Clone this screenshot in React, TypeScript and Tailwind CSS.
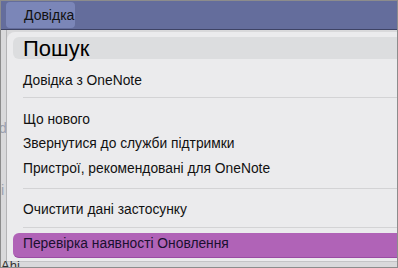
export default function App() {
  const items1 = ['Що нового', 'Звернутися до служби підтримки', 'Пристрої, рекомендовані для OneNote'];

  return (
    <div className="w-[398px] h-[268px] relative overflow-hidden bg-[#d9d9db] border border-[#8c8c8c] font-['Liberation_Sans',Arial,sans-serif] text-[#111]">
      {/* верхня панель меню */}
      <div className="h-[29px] bg-[#646d9c] border-b border-[#3e4365] flex items-stretch pt-[1px] pb-[1px] pl-[5px]">
        <div className="pl-[18px] pr-[1px] flex items-center rounded-[4px] bg-[#7b86b8] text-[14px] text-[#111]">Довідка</div>
      </div>

      <div className="flex h-[237px]">
        {/* фон програми за меню */}
        <div className="w-[6px] relative overflow-hidden border-r border-[#b4b4b6] text-[14px] text-[#9aa0b0]">
          <span className="absolute left-[-2px] top-[88px]">d</span>
          <span className="absolute left-[-3px] top-[150px]">li</span>
        </div>

        {/* меню */}
        <div className="flex-1 mt-[2px] mb-[5px] rounded-tl-[8px] bg-[#ebebed] border-b border-[#c4c4c6] pl-[6px] pt-[5px]">
          <div className="h-[22px] rounded-l-[6px] bg-[#dcdddf] pl-[10px] flex items-center text-[22px] text-black">Пошук</div>

          <div className="h-[24px] mt-[10px] pl-[10px] flex items-center text-[13.8px]">Довідка з OneNote</div>
          <div className="ml-[10px] mt-[4px] h-px bg-[#d3d3d5]"></div>

          <div className="mt-[10px]">
            {items1.map((t) => (
              <div key={t} className="h-[24.5px] pl-[10px] flex items-center text-[13.8px]">{t}</div>
            ))}
          </div>
          <div className="ml-[10px] mt-[6px] h-px bg-[#d3d3d5]"></div>

          <div className="h-[24px] mt-[10px] pl-[10px] flex items-center text-[13.8px]">Очистити дані застосунку</div>
          <div className="ml-[10px] mt-[4px] h-px bg-[#d3d3d5]"></div>

          <div className="h-[25px] mt-[5px] rounded-l-[6px] bg-[#b063b7] border-b border-[#9a4ba3] pl-[10px] flex items-center text-[13.8px] text-[#1a1030]">
            Перевірка наявності Оновлення
          </div>
        </div>
      </div>

      <div className="absolute left-0 bottom-[-6px] text-[13px] leading-[14px] text-[#333]">Ahi</div>
    </div>
  );
}
